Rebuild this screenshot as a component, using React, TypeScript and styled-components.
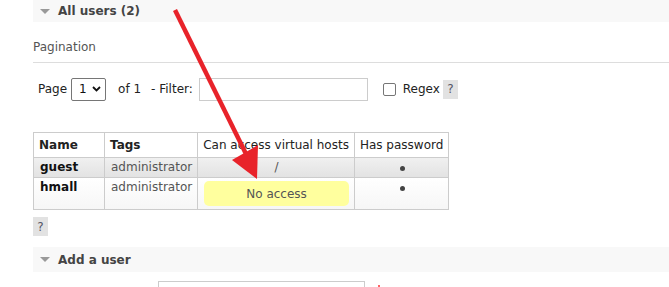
import React from 'react';
import styled, { createGlobalStyle } from 'styled-components';

const GlobalStyle = createGlobalStyle`
    body {
        margin: 0;
        background: #fff;
        font-family: "DejaVu Sans", Verdana, sans-serif;
        font-size: 12px;
        color: #484848;
    }
`;

const Page = styled.div`
    position: relative;
    padding-left: 33px;
    height: 287px;
    overflow: hidden;
`;

const SectionBar = styled.div<{ $height: number }>`
    display: flex;
    align-items: center;
    gap: 8px;
    height: ${p => p.$height}px;
    padding-left: 7px;
    background: #f8f8f8;
    font-weight: bold;
    color: #444;
`;

const Toggle = styled.span`
    width: 0;
    height: 0;
    border-left: 5px solid transparent;
    border-right: 5px solid transparent;
    border-top: 5px solid #999;
`;

const SubTitle = styled.div`
    margin-top: 18px;
    padding-bottom: 8px;
    color: #555;
    border-bottom: 1px solid #ddd;
`;

const Controls = styled.div`
    display: flex;
    align-items: center;
    height: 24px;
    margin-top: 14px;
    padding-left: 5px;
    color: #222;
`;

const Select = styled.div`
    display: flex;
    align-items: center;
    justify-content: space-between;
    box-sizing: border-box;
    width: 35px;
    height: 23px;
    margin-left: 4px;
    padding: 0 4px 0 7px;
    border: 1px solid #767676;
    border-radius: 2px;
    color: #111;
`;

const Label = styled.span<{ $ml: number }>`
    margin-left: ${p => p.$ml}px;
`;

const TextBox = styled.div`
    box-sizing: border-box;
    width: 169px;
    height: 23px;
    margin-left: 6px;
    border: 1px solid #ccc;
`;

const CheckBox = styled.span`
    box-sizing: border-box;
    width: 13px;
    height: 13px;
    margin-left: 15px;
    border: 1px solid #767676;
    border-radius: 2px;
`;

const Help = styled.span`
    display: inline-flex;
    align-items: center;
    justify-content: center;
    width: 15px;
    height: 19px;
    background: #e2e2e2;
    color: #556;
`;

const Table = styled.table`
    margin-top: 31px;
    border-collapse: collapse;
    color: #222;
`;

const Th = styled.th<{ $bold?: boolean; $width?: number }>`
    height: 24px;
    padding: 0 5px;
    border: 1px solid #ccc;
    text-align: left;
    font-weight: ${p => (p.$bold ? 'bold' : 'normal')};
    white-space: nowrap;
    ${p => (p.$width ? `width: ${p.$width}px;` : '')}
`;

const Row = styled.tr<{ $alt?: boolean }>`
    background: ${p =>
        p.$alt
            ? 'linear-gradient(#f0f0f0, #e2e2e2)'
            : 'linear-gradient(#ffffff, #f6f6f6)'};
`;

const Td = styled.td<{ $center?: boolean; $bold?: boolean }>`
    padding: 2px 5px 3px 6px;
    border: 1px solid #ccc;
    vertical-align: top;
    text-align: ${p => (p.$center ? 'center' : 'left')};
    font-weight: ${p => (p.$bold ? 'bold' : 'normal')};
    color: ${p => (p.$bold ? '#111' : '#555')};
    white-space: nowrap;
`;

const Dot = styled.span`
    display: inline-block;
    width: 5px;
    height: 5px;
    margin-top: 6px;
    border-radius: 50%;
    background: #444;
    vertical-align: top;
`;

const Badge = styled.div`
    display: flex;
    align-items: center;
    justify-content: center;
    height: 25px;
    margin: 1px 0 0;
    border-radius: 5px;
    background: #ffff9e;
    color: #555;
`;

const HelpLine = styled.div`
    display: flex;
    margin-top: 7px;
`;

const BarWrap = styled.div`
    margin-top: 11px;
`;

const FormRow = styled.div`
    display: flex;
    margin-top: 9px;
`;

const FormInput = styled.div`
    box-sizing: border-box;
    width: 207px;
    height: 20px;
    margin-left: 125px;
    border: 1px solid #ccc;
`;

const Required = styled.span`
    margin: 4px 0 0 13px;
    width: 2px;
    height: 2px;
    background: #f66;
`;

const Arrow = styled.svg`
    position: absolute;
    left: 0;
    top: 0;
    pointer-events: none;
`;

const users = [
    { name: 'guest', tags: 'administrator', vhosts: '/' },
    { name: 'hmall', tags: 'administrator', vhosts: null },
];

const App = () => {
    return (
        <Page>
            <GlobalStyle />
            <SectionBar $height={22}>
                <Toggle />
                All users (2)
            </SectionBar>
            <SubTitle>Pagination</SubTitle>
            <Controls>
                Page
                <Select>
                    1
                    <svg width="9" height="6" viewBox="0 0 9 6">
                        <path d="M1 1l3.5 3.5L8 1" fill="none" stroke="#111" strokeWidth="1.8" />
                    </svg>
                </Select>
                <Label $ml={12}>of 1</Label>
                <Label $ml={10}>- Filter:</Label>
                <TextBox />
                <CheckBox />
                <Label $ml={7}>Regex</Label>
                <Label $ml={3}>
                    <Help>?</Help>
                </Label>
            </Controls>
            <Table>
                <thead>
                    <tr>
                        <Th $bold $width={60}>Name</Th>
                        <Th $bold>Tags</Th>
                        <Th>Can access virtual hosts</Th>
                        <Th>Has password</Th>
                    </tr>
                </thead>
                <tbody>
                    {users.map((u, i) => (
                        <Row key={u.name} $alt={i % 2 === 0}>
                            <Td $bold>{u.name}</Td>
                            <Td>{u.tags}</Td>
                            <Td $center>
                                {u.vhosts ?? <Badge>No access</Badge>}
                            </Td>
                            <Td $center><Dot /></Td>
                        </Row>
                    ))}
                </tbody>
            </Table>
            <HelpLine>
                <Help>?</Help>
            </HelpLine>
            <BarWrap>
                <SectionBar $height={25}>
                    <Toggle />
                    Add a user
                </SectionBar>
            </BarWrap>
            <FormRow>
                <FormInput />
                <Required />
            </FormRow>
            <Arrow width="669" height="287">
                <line x1="175" y1="10" x2="248" y2="158" stroke="#e8232a" strokeWidth="4.5" />
                <polygon points="232,160 257,179 258,145" fill="#e8232a" />
            </Arrow>
        </Page>
    );
};

export default App;
